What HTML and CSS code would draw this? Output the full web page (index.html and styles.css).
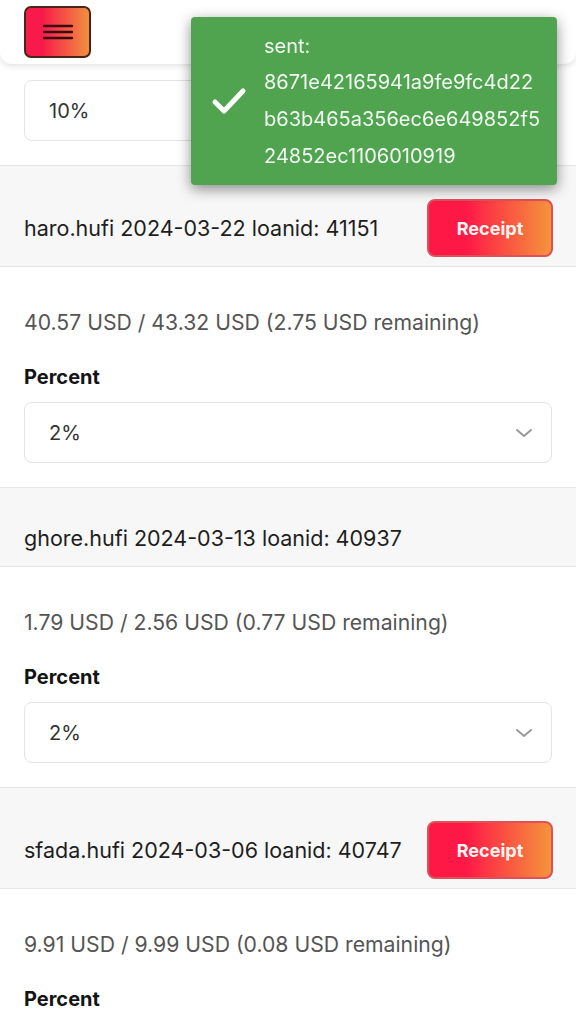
FILE: index.html
```html
<!DOCTYPE html>
<html>
<head>
<meta charset="utf-8">
<link rel="stylesheet" href="styles.css">
</head>
<body>
<header class="topbar">
  <button class="menu-btn" aria-label="Menu">
    <svg width="30" height="16" viewBox="0 0 30 16"><path d="M1 2h28M1 8h28M1 14h28" stroke="#3a0a12" stroke-width="2.4" stroke-linecap="round"/></svg>
  </button>
</header>

<div class="toast">
  <svg class="toast-check" width="36" height="28" viewBox="0 0 36 28"><path d="M4 15l9 9L32 4" fill="none" stroke="#fff" stroke-width="5" stroke-linecap="round" stroke-linejoin="round"/></svg>
  <div class="toast-text">sent:<br>8671e42165941a9fe9fc4d22<br>b63b465a356ec6e649852f5<br>24852ec1106010919</div>
</div>

<main class="list">
  <section class="loan">
    <div class="loan-body partial">
      <div class="select"><span>10%</span><svg class="chev" width="18" height="10" viewBox="0 0 18 10"><path d="M2 2l7 6 7-6" fill="none" stroke="#999" stroke-width="2" stroke-linecap="round" stroke-linejoin="round"/></svg></div>
    </div>
  </section>

  <section class="loan">
    <div class="loan-head">
      <span class="loan-title">haro.hufi 2024-03-22 loanid: 41151</span>
      <button class="receipt">Receipt</button>
    </div>
    <div class="loan-body">
      <p class="amount">40.57 USD / 43.32 USD (2.75 USD remaining)</p>
      <label class="label">Percent</label>
      <div class="select"><span>2%</span><svg class="chev" width="18" height="10" viewBox="0 0 18 10"><path d="M2 2l7 6 7-6" fill="none" stroke="#999" stroke-width="2" stroke-linecap="round" stroke-linejoin="round"/></svg></div>
    </div>
  </section>

  <section class="loan">
    <div class="loan-head plain">
      <span class="loan-title">ghore.hufi 2024-03-13 loanid: 40937</span>
    </div>
    <div class="loan-body">
      <p class="amount">1.79 USD / 2.56 USD (0.77 USD remaining)</p>
      <label class="label">Percent</label>
      <div class="select"><span>2%</span><svg class="chev" width="18" height="10" viewBox="0 0 18 10"><path d="M2 2l7 6 7-6" fill="none" stroke="#999" stroke-width="2" stroke-linecap="round" stroke-linejoin="round"/></svg></div>
    </div>
  </section>

  <section class="loan">
    <div class="loan-head">
      <span class="loan-title">sfada.hufi 2024-03-06 loanid: 40747</span>
      <button class="receipt">Receipt</button>
    </div>
    <div class="loan-body last">
      <p class="amount">9.91 USD / 9.99 USD (0.08 USD remaining)</p>
      <label class="label">Percent</label>
      <div class="select"><span>2%</span><svg class="chev" width="18" height="10" viewBox="0 0 18 10"><path d="M2 2l7 6 7-6" fill="none" stroke="#999" stroke-width="2" stroke-linecap="round" stroke-linejoin="round"/></svg></div>
    </div>
  </section>
</main>
</body>
</html>
```

FILE: styles.css
```css
* { box-sizing: border-box; }
html, body { margin: 0; padding: 0; }
body {
  font-family: Inter, "Noto Sans", sans-serif;
  background: #fff;
  color: #1e1e1e;
  width: 576px;
  height: 1024px;
  overflow: hidden;
}

.topbar {
  position: fixed;
  top: 0; left: 0; right: 0;
  height: 64px;
  background: #fff;
  border-radius: 0 0 12px 12px;
  box-shadow: 0 2px 6px rgba(0,0,0,0.12);
  padding: 6px 24px;
  z-index: 5;
}
.menu-btn {
  width: 67px;
  height: 52px;
  border: 2px solid #4a2418;
  border-radius: 7px;
  background: linear-gradient(90deg, #f81a4a 25%, #f0903e 100%);
  display: flex;
  align-items: center;
  justify-content: center;
  padding: 0;
}

.toast {
  position: fixed;
  top: 17px;
  left: 191px;
  width: 366px;
  height: 168px;
  background: #50a450;
  border-radius: 4px;
  box-shadow: 0 4px 14px rgba(0,0,0,0.45);
  z-index: 10;
  display: flex;
  align-items: center;
  padding: 0 0 0 20px;
  gap: 17px;
}
.toast-check { flex: none; }
.toast-text {
  color: #f2f8f2;
  font-size: 20px;
  line-height: 36.7px;
}

.list { display: flex; flex-direction: column; }
.loan { border-bottom: 1px solid #e6e6e6; }
.loan-head {
  background: #f7f7f7;
  border-bottom: 1px solid #e6e6e6;
  display: flex;
  align-items: center;
  justify-content: space-between;
  padding: 33px 23px 9px 24px;
}
.loan-head.plain { padding: 38px 24px 16px; }
.loan-title { font-size: 21.5px; line-height: 24px; color: #1e1e1e; }
.receipt {
  height: 58px;
  width: 126px;
  border: 2px solid #e0505a;
  border-radius: 8px;
  background: linear-gradient(90deg, #fe1846 30%, #f4943c 100%);
  color: #fff4f0;
  font-family: Inter, sans-serif;
  font-weight: 700;
  font-size: 18px;
}

.loan-body {
  padding: 40px 24px 24px;
  display: flex;
  flex-direction: column;
}
.loan-body.partial { padding-top: 80px; }
.loan-body.last { padding-bottom: 0; }
.amount {
  margin: 0 0 28px;
  font-size: 21.2px;
  line-height: 30px;
  color: #555;
}
.label {
  font-weight: 700;
  font-size: 20px;
  line-height: 24px;
  margin-bottom: 13px;
  color: #141414;
}
.select {
  height: 61px;
  border: 1px solid #e3e3e3;
  border-radius: 8px;
  background: #fff;
  display: flex;
  align-items: center;
  justify-content: space-between;
  padding: 0 18px 0 24px;
  font-size: 20px;
  color: #333;
}
.chev { flex: none; }
```
